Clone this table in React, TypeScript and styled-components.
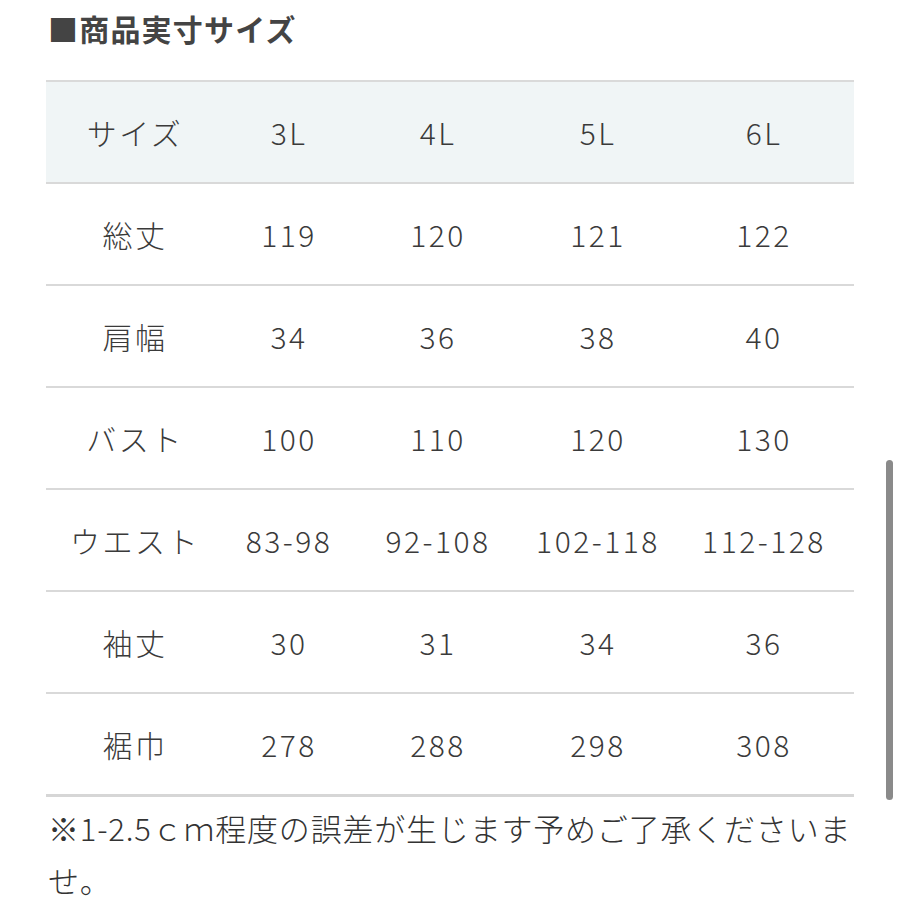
import React from "react";
import styled, { createGlobalStyle } from "styled-components";

const GlobalStyle = createGlobalStyle`
  html, body {
    margin: 0;
    padding: 0;
    background: #ffffff;
  }
  body {
    font-family: "Noto Sans CJK JP", "Noto Sans", sans-serif;
    color: #444;
  }
`;

const Page = styled.div`
  position: relative;
  width: 900px;
  height: 900px;
  overflow: hidden;
  padding: 8px 46px 0 46px;
  box-sizing: border-box;
`;

const Title = styled.h2`
  margin: 0 0 0 2px;
  font-size: 30px;
  font-weight: 700;
  line-height: 40px;
  color: #444;
  letter-spacing: 1.2px;
`;

const Table = styled.div`
  margin-top: 32px;
  width: 808px;
  border-top: 2px solid #dadada;
  border-bottom: 3px solid #d6d6d6;
`;

const Row = styled.div<{ $head?: boolean; $last?: boolean }>`
  display: grid;
  grid-template-columns: 178px 130px 168px 152px 180px;
  height: 100px;
  align-items: center;
  background: ${(p) => (p.$head ? "#f0f5f6" : "transparent")};
  border-bottom: ${(p) => (p.$last ? "none" : "2px solid #d9d9d9")};
`;

const Cell = styled.div`
  text-align: center;
  font-size: 30px;
  font-weight: 300;
  color: #3a3a3a;
  letter-spacing: 2.5px;
  white-space: nowrap;
`;

const Note = styled.p`
  margin: 5px 0 0 2px;
  font-size: 31px;
  line-height: 52px;
  font-weight: 300;
  color: #333;
  letter-spacing: 0.8px;
`;

const ScrollThumb = styled.div`
  position: absolute;
  right: 7px;
  top: 460px;
  width: 7px;
  height: 340px;
  border-radius: 4px;
  background: #8a8a8a;
`;

const rows: string[][] = [
  ["総丈", "119", "120", "121", "122"],
  ["肩幅", "34", "36", "38", "40"],
  ["バスト", "100", "110", "120", "130"],
  ["ウエスト", "83-98", "92-108", "102-118", "112-128"],
  ["袖丈", "30", "31", "34", "36"],
  ["裾巾", "278", "288", "298", "308"],
];

const App = () => {
  return (
    <>
      <GlobalStyle />
      <Page>
        <Title>■商品実寸サイズ</Title>
        <Table>
          <Row $head>
            {["サイズ", "3L", "4L", "5L", "6L"].map((c) => (
              <Cell key={c}>{c}</Cell>
            ))}
          </Row>
          {rows.map((r, i) => (
            <Row key={r[0]} $last={i === rows.length - 1}>
              {r.map((c, j) => (
                <Cell key={j}>{c}</Cell>
              ))}
            </Row>
          ))}
        </Table>
        <Note>※1-2.5ｃｍ程度の誤差が生じます予めご了承くださいませ。</Note>
        <ScrollThumb />
      </Page>
    </>
  );
};

export default App;
